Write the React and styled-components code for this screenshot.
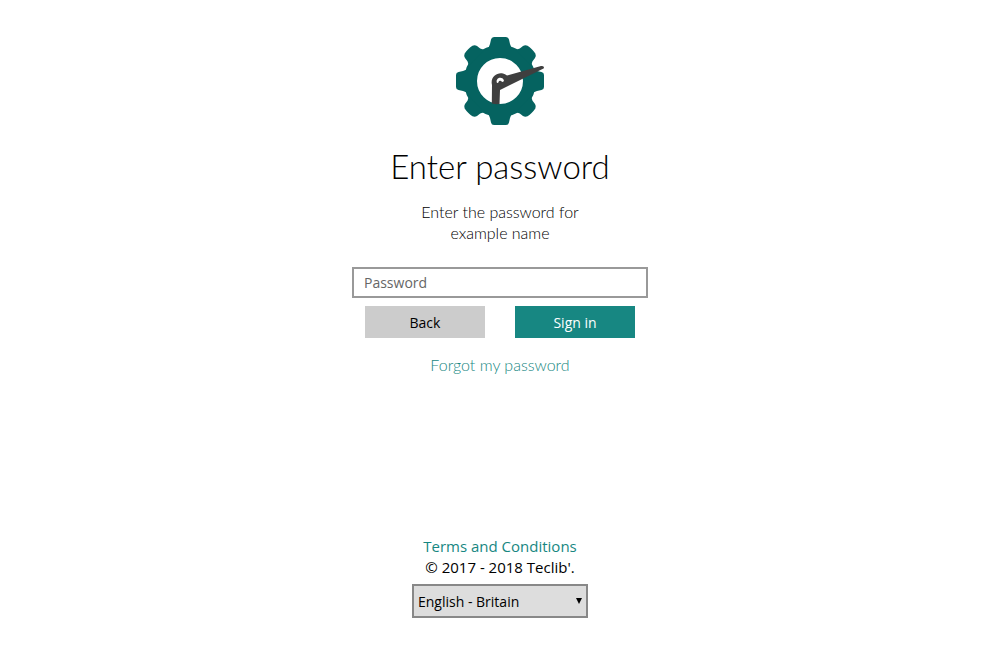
import React from "react";
import styled, { createGlobalStyle } from "styled-components";

const GlobalStyle = createGlobalStyle`
  *, *::before, *::after { box-sizing: border-box; }
  body {
    margin: 0;
    background: #fff;
    color: #000;
    font-family: "Open Sans", "Noto Sans", sans-serif;
    font-size: 15px;
    line-height: 21px;
  }
`;

const Page = styled.div`
  display: flex;
  flex-direction: column;
  align-items: center;
  justify-content: space-between;
  min-height: 100vh;
  padding: 37px 16px 42px;
`;

const Main = styled.main`
  display: flex;
  flex-direction: column;
  align-items: center;
  width: 100%;
  max-width: 296px;
  text-align: center;
`;

const Logo = styled.svg`
  display: block;
  width: 88px;
  height: 88px;
`;

const Title = styled.h1`
  margin: 19px 0 12px;
  font-family: Lato, "Open Sans", sans-serif;
  font-size: 33px;
  font-weight: 300;
  line-height: 45px;
  white-space: nowrap;
`;

const Intro = styled.p`
  margin: 0 0 24px;
  font-family: Lato, "Open Sans", sans-serif;
  font-size: 16px;
  font-weight: 300;
`;

const Form = styled.form`
  width: 100%;
`;

const PasswordInput = styled.input`
  display: block;
  width: 100%;
  height: 31px;
  padding: 0 10px;
  border: 2px solid #999;
  background: #fff;
  color: #000;
  font: inherit;
  font-size: 14px;
  &::placeholder { color: #666; opacity: 1; }
`;

const Actions = styled.div`
  display: grid;
  grid-template-columns: 1fr 1fr;
  gap: 30px;
  padding: 8px 13px 16px;
`;

const Button = styled.button`
  height: 32px;
  padding: 0;
  border: 0;
  background: ${(p) => (p.$primary ? "#178782" : "#ccc")};
  color: ${(p) => (p.$primary ? "#fff" : "#000")};
  font: inherit;
  font-size: 14px;
  cursor: pointer;
`;

const Link = styled.a`
  color: #178782;
  text-decoration: none;
`;

const ForgotLink = styled(Link)`
  font-family: Lato, "Open Sans", sans-serif;
  font-size: 16px;
  font-weight: 300;
`;

const Footer = styled.footer`
  display: flex;
  flex-direction: column;
  align-items: center;
`;

const LanguagePicker = styled.label`
  position: relative;
  width: 176px;
  margin-top: 6px;
`;

const Select = styled.select`
  display: block;
  width: 100%;
  height: 34px;
  padding: 0 20px 0 4px;
  border: 2px solid #888;
  border-radius: 0;
  appearance: none;
  background: #ddd;
  color: #000;
  font: inherit;
  font-size: 14px;
`;

const Arrow = styled.svg`
  position: absolute;
  top: 14px;
  right: 6px;
  width: 6px;
  height: 6px;
  pointer-events: none;
`;

const QUARTERS = [0, 90, 180, 270];

function GearLogo() {
  return (
    <Logo viewBox="-44 -44 88 88" role="img" aria-label="Teclib">
      <circle r="29.500" fill="none" stroke="#056360" strokeWidth="13" />
      {QUARTERS.map((angle) => (
        <g key={angle} transform={`rotate(${angle})`} fill="#056360">
          <path d="M-12-32 L-10-37 L-9-41.500 Q-8.500-44-6-44 H6 Q8.500-44 9-41.500 L10-37 L12-32Z" />
          <path
            transform="rotate(45)"
            d="M-11-33 L-9-37 L-8.500-41 Q-8-43.500-5.500-44.500 Q-3-45 0-45 Q3-45 5.500-44.500 Q8-43.500 8.500-41 L9-37 L11-33Z"
          />
        </g>
      ))}
      <path
        fill="#3f3f3f"
        fillRule="evenodd"
        d="M-8.200 22.500 L-8 4 C-10-4-3-9 3-7.500 Q5-7 7-5.500 L41-15 Q44-15.500 44-13.500 Q44-12.500 42.500-12 L7 5.500 L0 9 L-.500 23 Q-4.500 23.500-8.200 22.500Z M-3 2 Q-1.500 2.500-1 0 Q1-1 2 1 Q3 1 4 0 A3.700 3.700 0 1 0-3 2Z"
      />
    </Logo>
  );
}

export default function App() {
  return (
    <>
      <GlobalStyle />
      <Page>
        <Main>
          <GearLogo />
          <Title>Enter password</Title>
          <Intro>
            Enter the password for
            <br />
            example name
          </Intro>
          <Form onSubmit={(e) => e.preventDefault()}>
            <PasswordInput type="password" placeholder="Password" aria-label="Password" />
            <Actions>
              <Button type="button">Back</Button>
              <Button type="submit" $primary>Sign in</Button>
            </Actions>
          </Form>
          <ForgotLink href="#forgot">Forgot my password</ForgotLink>
        </Main>
        <Footer>
          <Link href="#terms">Terms and Conditions</Link>
          <span>© 2017 - 2018 Teclib'.</span>
          <LanguagePicker>
            <Select aria-label="Language" defaultValue="en-GB">
              <option value="en-GB">English - Britain</option>
            </Select>
            <Arrow viewBox="0 0 6 6" aria-hidden="true">
              <path d="M0 0H6L3 6Z" />
            </Arrow>
          </LanguagePicker>
        </Footer>
      </Page>
    </>
  );
}
